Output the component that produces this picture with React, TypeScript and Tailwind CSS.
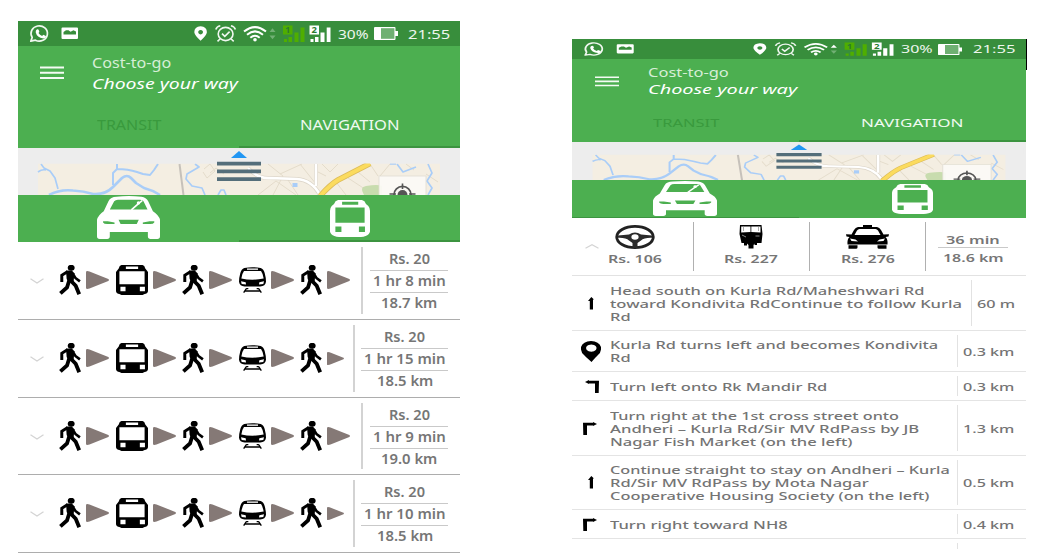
import { useLayoutEffect, useRef, useState } from "react";
import type { ReactNode } from "react";

/** One line of text, stretched horizontally to the given width. */
function Fit({ w, className = "", children }: { w: number; className?: string; children: ReactNode }) {
  const ref = useRef<HTMLSpanElement>(null);
  const [scale, setScale] = useState(1);
  useLayoutEffect(() => {
    if (ref.current) setScale(w / ref.current.offsetWidth);
  }, [w]);
  return (
    <div className={"shrink-0 whitespace-nowrap " + className} style={{ width: w }}>
      <span ref={ref} className="inline-block origin-left" style={{ transform: `scaleX(${scale})` }}>
        {children}
      </span>
    </div>
  );
}

function StatusIcons({ className, upActive = false }: { className: string; upActive?: boolean }) {
  return (
    <svg className={className} viewBox="0 0 313 25" preserveAspectRatio="none" fill="none">
      <g stroke="#f1f8f1" strokeWidth="1.700">
        <path d="M12.800 20.200 L14.200 16.400 A8.200 7.600 0 1 1 17.400 19.200 Z" strokeLinejoin="round" />
      </g>
      <path d="M18.800 8.600 q1.400-.8 2 .6 l.5 1.400 q0 .6-.8 1.400 q1.200 2.200 3.600 3 l1.200-1.200 2.600 1.200 q.2 2.400-2.600 2.600 q-6.400-1-7.600-6.400 q0-1.800 1.100-2.600z" fill="#fff" />
      <path fillRule="evenodd" d="M44.500 6.500 H59 q1 0 1 1 V17 q0 1-1 1 H44.500 q-1 0-1-1 V7.500 q0-1 1-1z M45.500 13.500 H58 V10.500 l-2.500-1.200 -3 1.500 -2-1.500 -2.500 0 -2.500 1.700z" fill="#fff" />
      <path fillRule="evenodd" d="M182.600 5.200 q6.300.4 6.300 6 q-.4 3-6.300 8.600 q-5.900-5.600-6.300-8.600 q0-5.600 6.300-6z M182.600 9 a2.400 2.200 0 1 0 .01 0z" fill="#fff" />
      <g stroke="#f1f8f1" strokeWidth="1.600">
        <ellipse cx="207.600" cy="13" rx="7.400" ry="6.600" />
        <path d="M204 12.600 l2.800 2.700 4.800-4.600" />
        <path d="M197.800 8.600 q1-3.200 4.500-3.800 M217.400 8.600 q-1-3.200-4.500-3.800" />
        <path d="M202 18 l-2.500 2.300 M213.200 18 l2.500 2.300" />
      </g>
      <g stroke="#fff" strokeWidth="2">
        <path d="M226 10.600 q11-9 22 0" />
        <path d="M229 13.700 q8-6.600 16 0" />
        <path d="M232.300 16.800 q4.700-4 9.400 0" />
      </g>
      <circle cx="237" cy="18.700" r="1.800" fill="#fff" />
      <path d="M251.500 11 l3-3.800 3 3.800z" fill={upActive ? "#fff" : "#72b075"} />
      <path d="M251.500 14.500 l3 3.800 3-3.800z" fill="#72b075" />
      <path d="M265 4.500 h9.500 v9 h-9.500z M266 18 h3 v3 h-3z M270.500 16 h3.500 v5 h-3.500z M276.500 11.500 h4 v9.500 h-4z M282.500 6.500 h4 v14.500 h-4z" fill="#4fae00" />
      <text x="267" y="12.300" fontSize="9.500" fontWeight="700" fill="#2c7d2f" fontFamily="Noto Sans, sans-serif">1</text>
      <path d="M291.500 4.500 h9.500 v9 h-9.500z M292.500 18 h3 v3 h-3z M297 16 h3.500 v5 h-3.500z M302.500 11.500 h4 v9.500 h-4z M308.700 6.500 h3.800 v14.500 h-3.800z" fill="#fff" />
      <text x="293.500" y="12.300" fontSize="9.500" fontWeight="700" fill="#2c7d2f" fontFamily="Noto Sans, sans-serif">2</text>
    </svg>
  );
}

function Battery({ className }: { className: string }) {
  return (
    <svg className={className} viewBox="0 0 24 13" preserveAspectRatio="none">
      <path d="M1 0 H20.500 q1 0 1 1 V4 H24 V9 H21.500 V12 q0 1-1 1 H1 q-1 0-1-1 V1 q0-1 1-1z" fill="#fff" />
      <rect x="7" y="1.200" width="13.400" height="10.600" fill="#6fb072" />
    </svg>
  );
}

function MenuIcon({ className }: { className: string }) {
  return (
    <svg className={className} viewBox="0 0 24 14" preserveAspectRatio="none">
      <path d="M0 .5 h24 v2 H0z M0 5.800 h24 v2 H0z M0 11.100 h24 v2 H0z" fill="#f4fbf4" />
    </svg>
  );
}

function MapStrip({ className }: { className: string }) {
  return (
    <svg className={className} viewBox="0 0 442 47" preserveAspectRatio="none" fill="none">
      <rect width="442" height="47" fill="#ededed" />
      <rect x="20" y="15.500" width="402" height="31.500" fill="#f4eee2" />
      <g stroke="#e4dccb" strokeWidth="1">
        <path d="M186 21 l6-5 5 7 -8 7 -4-6 M192 25 l6-5 8 6 M250 16 l15 12 -10 19 M262 26 l22-10 M240 47 l18-14 20 14 M268 29 l12 18 M282 16 l16 20 M304 16 l8 8 8-8 M308 28 l-10-5 M330 30 l26 17 M352 16 l8 12 M340 24 l12 10 M318 34 l10 13 M372 16 l-10 12 M388 16 l8 6 M408 26 l12 8" />
      </g>
      <g stroke="#a9cdf8" strokeWidth="1.700" strokeLinejoin="round">
        <path d="M23 16 L26 20 L32 23 L37 30 L40 41 M20 24 Q24 21 28 22" />
        <path d="M99 16 V21 L95 25 V37 M99 21 Q110 21 119 24 L125 26 L132 27 L136 22 L140 16" strokeWidth="2" />
        <path d="M31 47 Q42 41 55 42.500 Q66 43 75 46 Q87 47 95 39 L104 30 Q109 26 113 30 L118 35 L126 40 Q134 42 142 47" strokeWidth="2.600" />
        <path d="M177 16 L181 19 L169 26 L168 31 L174 38 L184 40 L187 47 M200 47 L203 42 L206 42 L208 47" />
        <path d="M379 16 L385 24 L398 19 M410 16 L414 25 L409 33 L414 40 L410 47 M372 16 h6" />
      </g>
      <path d="M161.500 16 L165.500 47" stroke="#c6c1ba" strokeWidth="2" />
      <g stroke="#ddd6c9" strokeWidth="4">
        <path d="M230 20 Q240 31 252 30 L279 31 Q294 32 302 47 M298 16 V38" />
      </g>
      <g stroke="#fff" strokeWidth="2.600">
        <path d="M230 20 Q240 31 252 30 L279 31 Q294 32 302 47 M298 16 V38" />
      </g>
      <path d="M302 48 Q313 36 320 32 L352 15.500" stroke="#dcbb59" strokeWidth="5.500" />
      <path d="M302 48 Q313 36 320 32 L352 15.500" stroke="#fbdb5e" strokeWidth="4" />
      <rect x="274.500" y="35" width="5" height="4" fill="#a9cdf8" />
      <path d="M346 47 q-5-8 2-9 q12-2 16 0 V47z" fill="#c8dcae" />
      <rect x="20" y="7" width="420" height="8.500" fill="#ededed" />
      <rect x="361" y="28" width="47" height="20" fill="#fbfaf5" fillOpacity=".94" stroke="#e1ddd3" strokeWidth=".8" />
      <circle cx="384.500" cy="47" r="8.600" stroke="#555" strokeWidth="1.700" />
      <circle cx="384.500" cy="47" r="5" fill="#555" />
      <path d="M384.500 35.500 V41 M371.500 46 H378 M391 46 H397.500" stroke="#555" strokeWidth="1.600" />
      <path d="M213 10 L221 3 L229 10z" fill="#2196f3" />
      <path d="M199 13.700 h44 v3.800 h-44z M199 21.500 h44 v3.800 h-44z M199 29.300 h44 v3.800 h-44z" fill="#546e7a" />
    </svg>
  );
}

function CarTab({ className }: { className: string }) {
  return (
    <svg className={className} viewBox="0 0 187 130" preserveAspectRatio="none">
      <path
        fill="#fff"
        fillRule="evenodd"
        d="M30 130 H8 Q0 130 0 122 V72 Q3 58 20 46 L34 16 Q40 2 58 2 Q93 -2 132 2 Q146 4 152 16 L166 46 Q184 58 187 72 V122 q0 8-8 8 h-20 q-8 0-8-8 V109 H38 V122 q0 8-8 8z M38 41 H150 L138 16 Q134 11 128 11 H62 Q55 11 51 16z M18 76 h14 l20 4 v5 H30 q-9 0-12-5z M64 72 H124 L118 85 H70z M170 76 h-14 l-20 4 v5 h22 q9 0 12-5z"
      />
      <path d="M102 42 L124 22 L134 14" stroke="#fff" strokeWidth="5" />
      <circle cx="123" cy="21" r="5" fill="#fff" />
    </svg>
  );
}

function BusTab({ className }: { className: string }) {
  return (
    <svg className={className} viewBox="0 0 119 110" preserveAspectRatio="none">
      <path
        fill="#fff"
        fillRule="evenodd"
        d="M24 0 H95 Q104 2 107 12 L114 18 Q119 24 119 32 V94 Q117 104 106 107 Q100 110 92 110 H27 Q19 110 13 107 Q2 104 0 94 V32 Q0 24 5 18 L12 12 Q15 2 24 0z M36 5 V14 H84 V5z M16 22 V68 H103 V22z M16 79 V95 H34 V79z M86 79 V95 H104 V79z"
      />
    </svg>
  );
}

function Walk() {
  return (
    <svg className="h-[30px] w-[23px] shrink-0" viewBox="0 0 66 88" preserveAspectRatio="none" fill="none" stroke="#000">
      <ellipse cx="35" cy="8" rx="10" ry="8.500" fill="#000" stroke="none" />
      <path d="M20 16 H37 L44 24 L42 49 L26 52 L22 40z" fill="#000" stroke="none" />
      <path d="M24 20 L8 30 V50" strokeWidth="8.500" />
      <path d="M40 26 L47 38 L60 48" strokeWidth="7.500" />
      <path d="M29 46 L23 66 L4 83" strokeWidth="11" />
      <path d="M34 46 L48 61 L58 86" strokeWidth="11" />
    </svg>
  );
}

function BusIcon() {
  return (
    <svg className="h-[30px] w-[32px] shrink-0" viewBox="0 0 94 87" preserveAspectRatio="none">
      <path
        fillRule="evenodd"
        d="M16 0 H78 Q84 1 86 10 L94 20 V76 Q92 84 84 84 L78 87 H16 L10 84 Q2 84 0 76 V20 L8 10 Q10 1 16 0z M29 4 V11.500 H65 V4z M10 18 V56 H84 V18z M13 63 V76 H28 V63z M70 63 V76 H85 V63z"
      />
    </svg>
  );
}

function TrainIcon() {
  return (
    <svg className="h-[26px] w-[27px] shrink-0" viewBox="0 0 81 77" preserveAspectRatio="none">
      <path
        fillRule="evenodd"
        d="M16 3 Q40 -2 65 3 Q74 6 77 18 Q81 32 81 44 Q79 57 64 58 H17 Q2 57 0 44 Q0 32 4 18 Q7 6 16 3z M15 12 Q10 18 7 34 Q40 41 74 34 Q71 18 66 12z M6 42 L8 50 L21 52 L20 45z M75 42 L73 50 L60 52 L61 45z"
      />
      <path d="M24 4 H57 V9 H24z" fill="#ccc" />
      <path d="M22 64 L14 76 M59 64 L67 76 M22 64 H28 M53 64 H59 M17 71 H64" stroke="#000" strokeWidth="4" fill="none" />
    </svg>
  );
}

function Arrow({ small = false }: { small?: boolean }) {
  return (
    <svg className={small ? "h-[13px] w-[17px] shrink-0" : "h-[18px] w-[23px] shrink-0"} viewBox="0 0 23 18" preserveAspectRatio="none">
      <path d="M1.200 0 Q0 0 0 1.200 V16.800 Q0 18 1.200 18 L3.500 17.600 L22.300 10 Q23.600 9 22.300 8 L3.500 .4z" fill="#857976" />
    </svg>
  );
}

type Trip = { time: string; timeW: number; dist: string; wide: boolean; h: string };

const trips: Trip[] = [
  { time: "1 hr 8 min", timeW: 73, dist: "18.7 km", wide: false, h: "h-[78px]" },
  { time: "1 hr 15 min", timeW: 82, dist: "18.5 km", wide: true, h: "h-[78px]" },
  { time: "1 hr 9 min", timeW: 73, dist: "19.0 km", wide: false, h: "h-[77px]" },
  { time: "1 hr 10 min", timeW: 82, dist: "18.5 km", wide: true, h: "h-[78px]" },
];

function TripRow({ trip }: { trip: Trip }) {
  return (
    <div className={"flex border-b border-[#adadad] bg-white " + trip.h}>
      <div className="flex flex-1 items-center pb-px pl-3">
        <svg className="mr-[15px] mt-[2px] h-[6px] w-[14px] shrink-0" viewBox="0 0 14 6" fill="none">
          <path d="M.5 .7 L7 5 L13.500 .7" stroke="#d4d4d4" strokeWidth="1.300" />
        </svg>
        <Walk />
        <div className="ml-1 mr-[7px]"><Arrow /></div>
        <BusIcon />
        <div className="ml-[5px] mr-[6px]"><Arrow /></div>
        <Walk />
        <div className="ml-1 mr-[7px]"><Arrow /></div>
        <TrainIcon />
        <div className="ml-[5px] mr-[6px]"><Arrow /></div>
        <Walk />
        <div className="ml-1"><Arrow small={trip.wide} /></div>
      </div>
      <div className={trip.wide ? "my-[5px] w-[2px] bg-[#d3d3d3]" : "my-[5px] -ml-px mr-px w-[2px] bg-[#d3d3d3]"} />
      <div className={"ml-[6px] mr-3 flex flex-col items-center pt-[6px] text-[13.500px] font-semibold leading-[21px] text-[#767676] " + (trip.wide ? "w-[87px]" : "w-[78px]")}>
        <Fit w={41} className="pt-px">Rs. 20</Fit>
        <div className="h-px w-full bg-[#c9c9c9]" />
        <Fit w={trip.timeW}>{trip.time}</Fit>
        <div className="h-px w-full bg-[#c9c9c9]" />
        <Fit w={56}>{trip.dist}</Fit>
      </div>
    </div>
  );
}

function TransitPhone() {
  return (
    <div className="ml-[18px] mt-[21px] flex h-[532px] w-[442px] shrink-0 flex-col">
      <div className="flex h-[25px] shrink-0 items-center bg-[#388e3c] text-[13px] leading-[26px] text-[#eef6ee]">
        <StatusIcons className="h-[25px] w-[313px] shrink-0" />
        <Fit w={31} className="ml-[7px]">30%</Fit>
        <Battery className="ml-[5px] h-[13px] w-[24px] shrink-0" />
        <Fit w={42} className="ml-[10px]">21:55</Fit>
      </div>
      <div className="flex h-[69px] shrink-0 bg-[#4caf50]">
        <MenuIcon className="ml-[22px] mr-[28px] mt-[20px] h-[14px] w-[24px] shrink-0" />
        <div className="pt-[6px] text-[14.500px] leading-[20px]">
          <Fit w={79} className="text-[#d6eed7]">Cost-to-go</Fit>
          <Fit w={146} className="pt-px italic text-white">Choose your way</Fit>
        </div>
      </div>
      <div className="flex h-[33px] shrink-0 bg-[#4caf50] text-[13.500px] leading-[20px]">
        <div className="flex w-[221px] justify-center"><Fit w={64} className="text-[#399a3d]">TRANSIT</Fit></div>
        <div className="flex flex-1 justify-center border-b-2 border-[#3c9440]"><Fit w={99} className="text-[#f0faf0]">NAVIGATION</Fit></div>
      </div>
      <MapStrip className="h-[47px] w-full shrink-0" />
      <div className="flex h-[47px] shrink-0 bg-[#4caf50]">
        <div className="flex w-[221px] justify-center pt-px"><CarTab className="h-[43px] w-[63px]" /></div>
        <div className="flex flex-1 justify-center border-b-2 border-[#3c9440] pt-[5px]"><BusTab className="h-[37px] w-[40px]" /></div>
      </div>
      {trips.map((t) => (
        <TripRow key={t.time} trip={t} />
      ))}
    </div>
  );
}

function Wheel() {
  return (
    <svg className="h-[24px] w-[40px]" viewBox="0 0 40 24" preserveAspectRatio="none" fill="none">
      <ellipse cx="20" cy="12" rx="18.300" ry="10.600" stroke="#222" strokeWidth="2.800" />
      <path d="M3 10.500 L14 9.500 Q20 5.500 26 9.500 L37 10.500 V12.800 Q29 12.500 26 15.500 L22.500 18 V23 H17.500 V18 L14 15.500 Q11 12.500 3 12.800z" fill="#2b2b2b" />
      <ellipse cx="20" cy="12" rx="3.600" ry="2.800" fill="#fff" />
    </svg>
  );
}

function Rickshaw() {
  return (
    <svg className="h-[24px] w-[24px]" viewBox="0 0 24 24" preserveAspectRatio="none">
      <path fillRule="evenodd" d="M1 0 H22.500 L23.500 9 L22.500 18 H18 V20 H15.500 V18.500 L14.500 20 V23.500 H9.500 V20 L8 18.500 V20.500 H5 V18 H2.500 L.5 9z M2.200 1.500 V7.500 L11.500 7 V1.500z M12.300 1.500 V7 L21.500 7.500 V1.500z" />
      <path d="M3 10 l4 2 M16.500 11 h4" stroke="#aaa" strokeWidth=".8" />
      <path d="M4.500 1 V6 M19.500 1 V6" stroke="#888" strokeWidth=".7" />
    </svg>
  );
}

function Taxi() {
  return (
    <svg className="h-[24px] w-[43px]" viewBox="0 0 43 24" preserveAspectRatio="none">
      <path
        fillRule="evenodd"
        d="M17 0 H26 V2 H31 Q33.500 2.300 35 5 L37.500 9.500 L43 9.300 L42.500 11.500 L39.500 12 Q42 14 41.500 19.500 H1.500 Q1 14 3.500 12 L.5 11.500 L0 9.300 L5.500 9.500 L8 5 Q9.500 2.300 12 2 H17z M8.500 10 H34.500 L32 5.500 Q31 4 29.500 4 H13.500 Q12 4 11 5.500z M4 13.500 L5.500 16 L12 16.500 L9.500 14.500z M39 13.500 L37.500 16 L31 16.500 L33.500 14.500z"
      />
      <path d="M2.500 20.200 H11.500 V22.500 Q11.500 23.800 10 23.800 H2.500z M31.500 20.200 H40.500 V23.800 H33 Q31.500 23.800 31.500 22.500z" />
    </svg>
  );
}

function StepIcon({ kind }: { kind: "up" | "pin" | "left" | "right" }) {
  if (kind === "pin")
    return (
      <svg className="h-[21px] w-[20px]" viewBox="0 0 20 21" preserveAspectRatio="none">
        <path fillRule="evenodd" d="M10 0 Q18 .5 20 6 Q20.500 11 17 14 L14.500 16.500 L10.500 21 L5.500 16.500 L3 14 Q-.5 11 0 6 Q2 .5 10 0z M10.300 3.500 a5.200 3.600 0 1 0 .01 0z" />
      </svg>
    );
  if (kind === "up")
    return (
      <svg className="h-[13px] w-[6px]" viewBox="0 0 6 13">
        <path d="M3.300 0 L6 2.600 H5 V12.500 H1.800 V4 H0z" />
      </svg>
    );
  return (
    <svg className={kind === "left" ? "ml-[2px] h-[13px] w-[14px] -scale-x-100" : "mr-[2px] h-[13px] w-[14px]"} viewBox="0 0 14 13">
      <path d="M0 .7 H10 V0 L14 2 L10 4 V3.500 H4 V13 H.3z" />
    </svg>
  );
}

type Step = { icon: "up" | "pin" | "left" | "right"; lines: [string, number][]; dist: string; distW: number; h: string };

const steps: Step[] = [
  { icon: "up", lines: [["Head south on Kurla Rd/Maheshwari Rd", 314], ["toward Kondivita RdContinue to follow Kurla", 352], ["Rd", 20]], dist: "60 m", distW: 38, h: "h-[55px]" },
  { icon: "pin", lines: [["Kurla Rd turns left and becomes Kondivita", 328], ["Rd", 20]], dist: "0.3 km", distW: 52, h: "h-[41px]" },
  { icon: "left", lines: [["Turn left onto Rk Mandir Rd", 218]], dist: "0.3 km", distW: 52, h: "h-[29px]" },
  { icon: "right", lines: [["Turn right at the 1st cross street onto", 289], ["Andheri – Kurla Rd/Sir MV RdPass by JB", 309], ["Nagar Fish Market (on the left)", 242]], dist: "1.3 km", distW: 52, h: "h-[55px]" },
  { icon: "up", lines: [["Continue straight to stay on Andheri – Kurla", 340], ["Rd/Sir MV RdPass by Mota Nagar", 258], ["Cooperative Housing Society (on the left)", 319]], dist: "0.5 km", distW: 52, h: "h-[54px]" },
  { icon: "right", lines: [["Turn right toward NH8", 178]], dist: "0.4 km", distW: 52, h: "h-[29px]" },
];

function StepRow({ step }: { step: Step }) {
  return (
    <div className={"flex shrink-0 items-center border-b border-[#e4e4e4] bg-white text-[11.500px] font-medium leading-[13px] text-[#747474] " + step.h}>
      <div className="flex w-[38px] shrink-0 justify-center">
        <StepIcon kind={step.icon} />
      </div>
      <div className="flex-1">
        {step.lines.map(([text, w]) => (
          <Fit key={text} w={w}>{text}</Fit>
        ))}
      </div>
      <div className="my-1 mr-[5px] w-px self-stretch bg-[#e2e2e2]" />
      <Fit w={step.distW} className="mr-[11px]">{step.dist}</Fit>
    </div>
  );
}

function Fare({ icon, price, className }: { icon: ReactNode; price: string; className: string }) {
  return (
    <div className={"flex shrink-0 flex-col items-center pt-[7px] leading-[16px] " + className}>
      {icon}
      <Fit w={54} className="mt-[2px]">{price}</Fit>
    </div>
  );
}

function NavigationPhone() {
  return (
    <div className="ml-[112px] mt-[39px] flex h-[510px] w-[454px] shrink-0 flex-col overflow-hidden">
      <div className="flex h-[20px] shrink-0 items-center bg-[#388e3c] text-[11.500px] leading-[20px] text-[#eef6ee]">
        <StatusIcons className="h-[20px] w-[322px] shrink-0" upActive />
        <Fit w={32} className="ml-[7px]">30%</Fit>
        <Battery className="ml-[5px] h-[11px] w-[24px] shrink-0" />
        <Fit w={42} className="ml-[11px]">21:55</Fit>
      </div>
      <div className="flex h-[56px] shrink-0 bg-[#4caf50]">
        <MenuIcon className="ml-[23px] mr-[29px] mt-[17px] h-[11px] w-[24px] shrink-0" />
        <div className="pt-[6px] text-[12px] leading-[16px]">
          <Fit w={81} className="text-[#d6eed7]">Cost-to-go</Fit>
          <Fit w={149} className="pt-px italic text-white">Choose your way</Fit>
        </div>
      </div>
      <div className="flex h-[27px] shrink-0 bg-[#4caf50] text-[11.500px] leading-[16px]">
        <div className="flex w-[227px] justify-center"><Fit w={66} className="text-[#399a3d]">TRANSIT</Fit></div>
        <div className="flex flex-1 justify-center border-b-2 border-[#3c9440] pr-px"><Fit w={102} className="text-[#f0faf0]">NAVIGATION</Fit></div>
      </div>
      <MapStrip className="h-[38px] w-full shrink-0" />
      <div className="flex h-[38px] shrink-0 bg-[#4caf50]">
        <div className="flex w-[227px] justify-center border-b border-[#3c9440] pr-[2px] pt-px"><CarTab className="h-[35px] w-[64px]" /></div>
        <div className="flex flex-1 justify-center pt-[4px]"><BusTab className="h-[30px] w-[41px]" /></div>
      </div>
      <div className="flex h-[58px] shrink-0 border-b border-[#e2e2e2] bg-white text-[11.500px] font-semibold text-[#767676]">
        <svg className="ml-[13px] mt-[26px] h-[5px] w-[14px] shrink-0" viewBox="0 0 14 5" fill="none">
          <path d="M.5 4.300 L7 .7 L13.500 4.300" stroke="#d4d4d4" strokeWidth="1.200" />
        </svg>
        <Fare icon={<Wheel />} price="Rs. 106" className="ml-[5px] w-[62px]" />
        <div className="mb-1 ml-[27px] mt-1 w-px bg-[#b0b0b0]" />
        <Fare icon={<Rickshaw />} price="Rs. 227" className="w-[115px] pr-[2px]" />
        <div className="mb-1 mt-1 w-px bg-[#b0b0b0]" />
        <Fare icon={<Taxi />} price="Rs. 276" className="w-[115px]" />
        <div className="mb-1 mt-1 w-px bg-[#b0b0b0]" />
        <div className="ml-[12px] flex w-[70px] flex-col items-center pt-[14px] leading-[15px]">
          <Fit w={54}>36 min</Fit>
          <div className="mb-px h-px w-full bg-[#c9c9c9]" />
          <Fit w={61} className="mt-px">18.6 km</Fit>
        </div>
      </div>
      {steps.map((s, i) => (
        <StepRow key={i} step={s} />
      ))}
      <div className="flex h-[10px] shrink-0 justify-end pt-[4px]">
        <div className="mr-[68px] w-px bg-[#e2e2e2]" />
      </div>
    </div>
  );
}

export default function App() {
  return (
    <div className="flex h-[557px] w-[1053px] overflow-hidden bg-white font-['Noto_Sans',sans-serif]">
      <TransitPhone />
      <NavigationPhone />
      <div className="mt-[39px] h-[31px] w-px bg-black" />
    </div>
  );
}
